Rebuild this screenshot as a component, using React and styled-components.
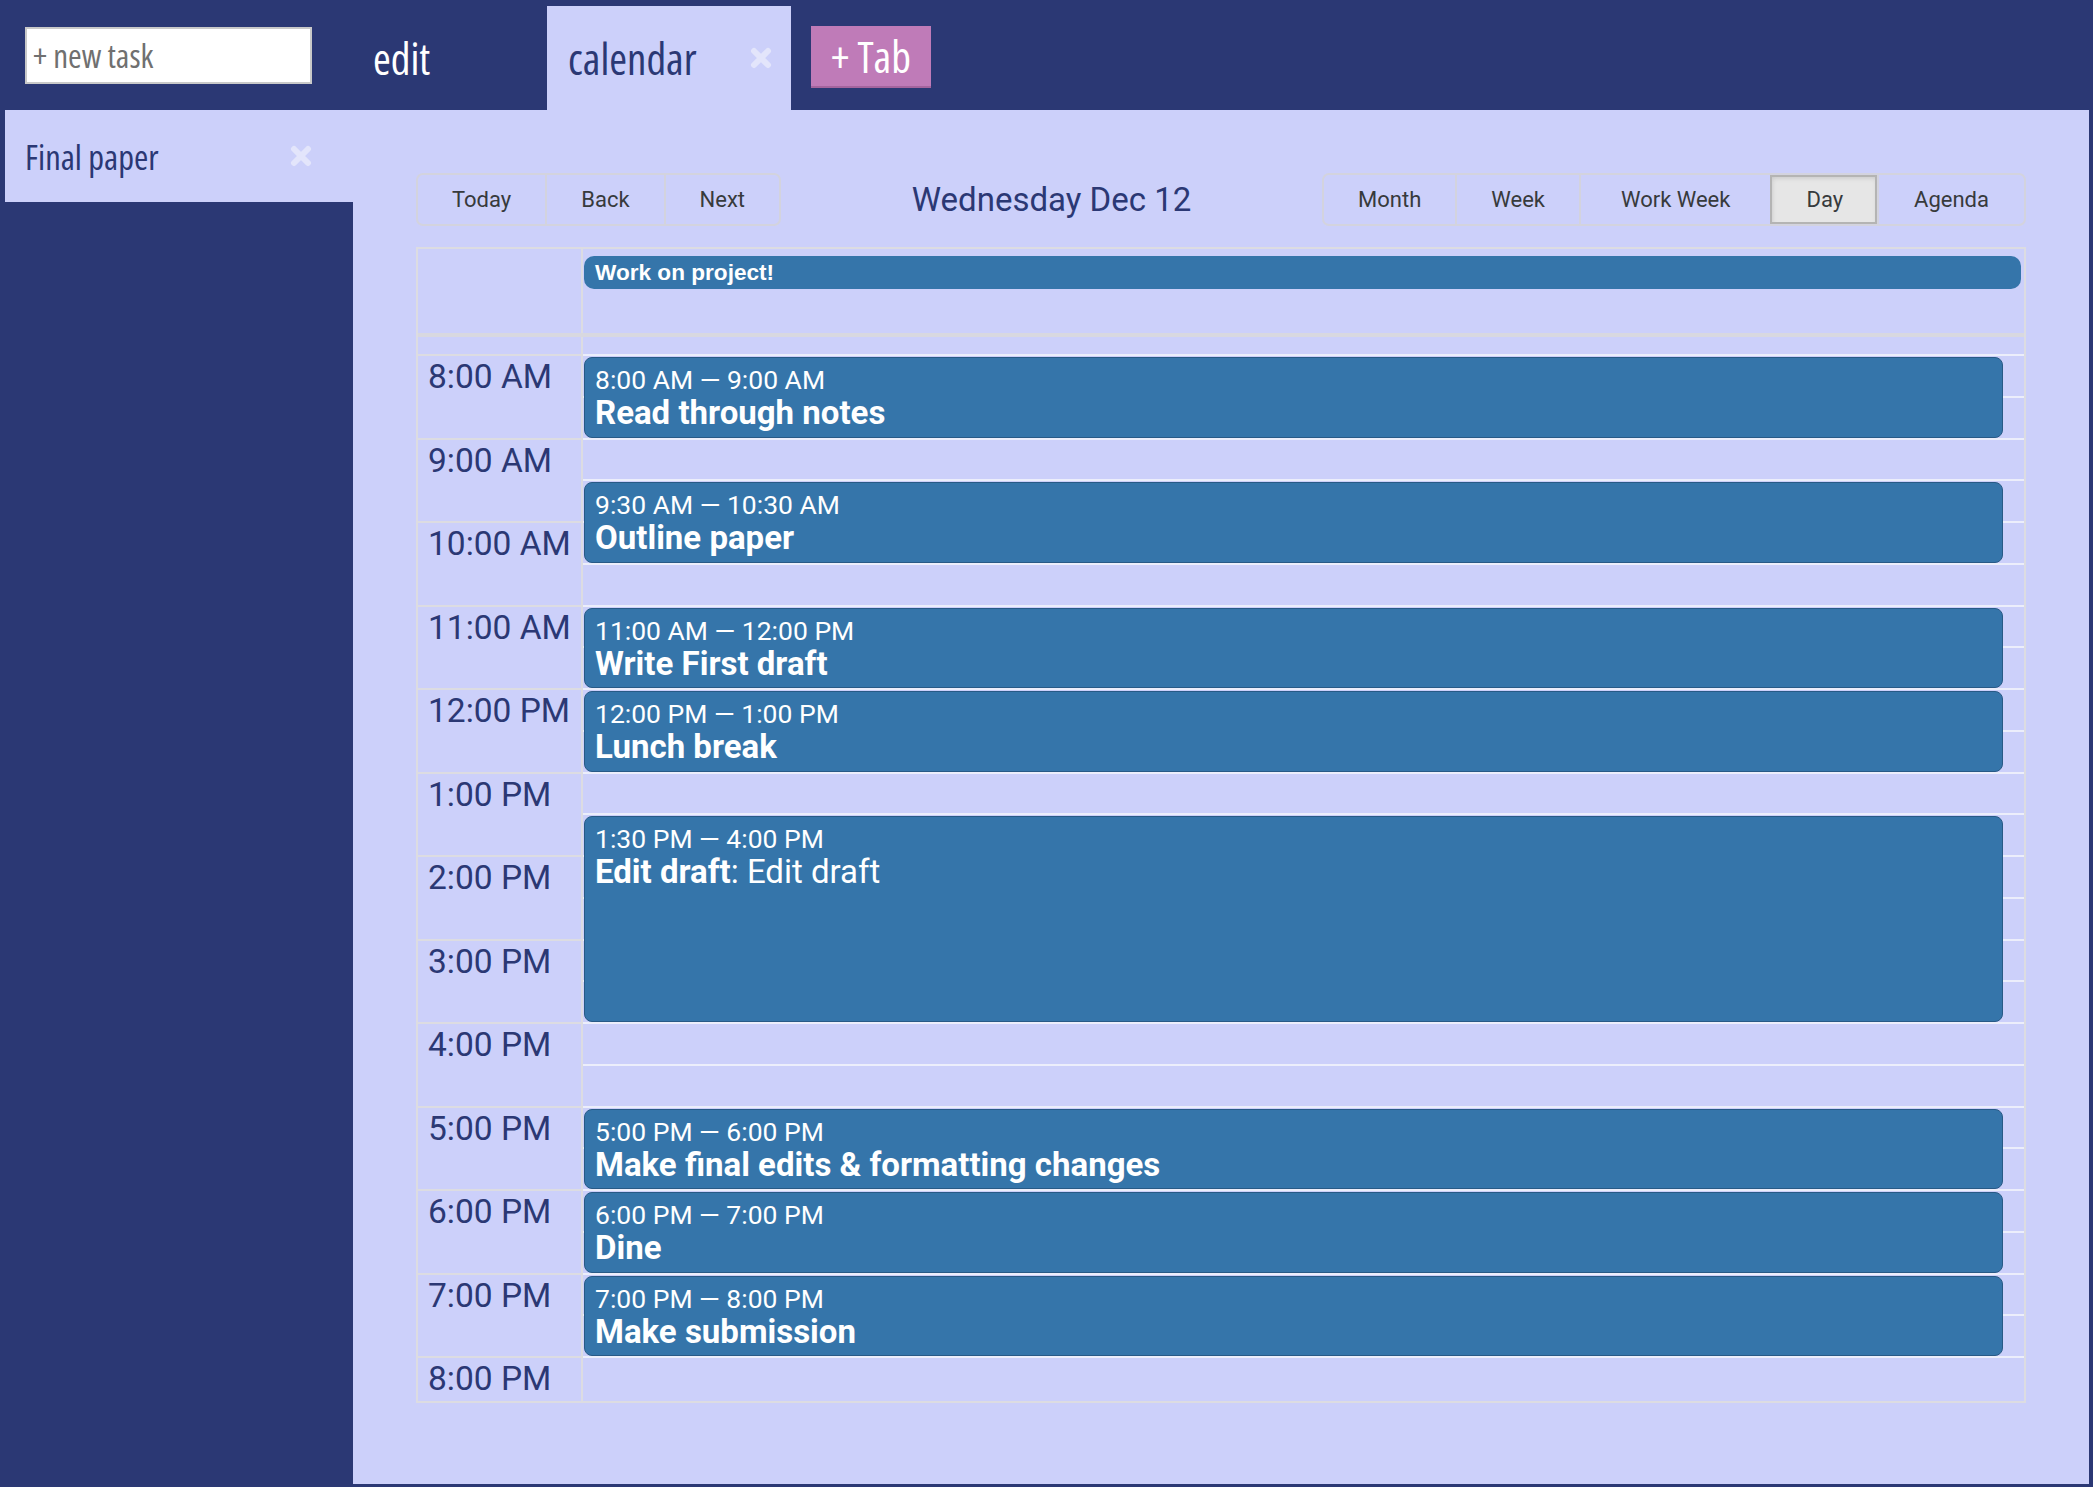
import React from "react";
import styled, { createGlobalStyle } from "styled-components";

const NAVY = "#2b3874";
const LAV = "#ccd0fa";
const EVENT = "#3575aa";
const HOUR = 83.5;
const STRIP = 19;

const GlobalStyle = createGlobalStyle`
  html, body { margin: 0; padding: 0; background: ${NAVY}; }
  body { font-family: Roboto, "Liberation Sans", sans-serif; }
  *, *::before, *::after { box-sizing: border-box; }
`;

const condensed = `
  font-family: "Liberation Sans Narrow", "Open Sans", "DejaVu Sans", sans-serif;
  font-stretch: 75%;
`;

const Page = styled.div`
  width: 2093px;
  height: 1487px;
  background: ${NAVY};
  display: flex;
  flex-direction: column;
  padding: 0 4px 3px 5px;
`;

const Header = styled.header`
  height: 110px;
  display: flex;
  align-items: stretch;
  flex-shrink: 0;
`;

const NewTaskArea = styled.div`
  width: 347px;
  display: flex;
  align-items: center;
  padding-left: 20px;
`;

const NewTaskInput = styled.input`
  width: 287px;
  height: 57px;
  border: 2px solid #c9c9c9;
  background: #fff;
  padding: 0 6px;
  ${condensed}
  font-size: 33px;
  color: #333;
  outline: none;
  &::placeholder { color: #707070; }
`;

const Tab = styled.div`
  margin-top: 6px;
  display: flex;
  align-items: center;
  padding: 0 19px 0 21px;
  width: ${(p) => p.$width}px;
  background: ${(p) => (p.$active ? LAV : "transparent")};
  color: ${(p) => (p.$active ? NAVY : "#fff")};
  ${condensed}
  font-size: 43px;
  justify-content: space-between;
`;

const CloseIcon = ({ size = 22 }) => (
  <svg width={size} height={size} viewBox="0 0 22 22">
    <path d="M4 4 L18 18 M18 4 L4 18" stroke="#e3e5fb" strokeWidth="6" strokeLinecap="round" />
  </svg>
);

const AddTab = styled.button`
  align-self: center;
  margin: 4px 0 0 20px;
  width: 120px;
  height: 62px;
  border: none;
  border-bottom: 2px solid #a4649e;
  background: #bf7bb8;
  color: #fff;
  ${condensed}
  font-size: 43px;
  padding: 0;
`;

const Main = styled.div`
  flex: 1;
  display: flex;
  min-height: 0;
`;

const Sidebar = styled.aside`
  width: 348px;
  flex-shrink: 0;
`;

const SidebarItem = styled.div`
  height: 92px;
  background: ${LAV};
  display: flex;
  align-items: center;
  justify-content: space-between;
  padding: 0 41px 0 20px;
  color: ${NAVY};
  ${condensed}
  font-size: 34.5px;
`;

const Content = styled.main`
  flex: 1;
  background: ${LAV};
  padding: 63px 63px 0 63px;
`;

const Toolbar = styled.div`
  display: flex;
  align-items: center;
  height: 53px;
`;

const ButtonGroup = styled.div`
  display: flex;
  height: 53px;
  border: 2px solid #d3d3de;
  border-radius: 7px;
  overflow: hidden;
`;

const ToolButton = styled.button`
  border: none;
  border-left: ${(p) => (p.$first ? "none" : "2px solid #d3d3de")};
  background: ${(p) => (p.$active ? "#e6e6e6" : "transparent")};
  box-shadow: ${(p) => (p.$active ? "inset 0 3px 5px rgba(0,0,0,0.14)" : "none")};
  outline: ${(p) => (p.$active ? "2px solid #b4b4b4" : "none")};
  outline-offset: -2px;
  padding: 0 ${(p) => p.$pad || 34}px;
  font-family: Roboto, "Liberation Sans", sans-serif;
  font-size: 22px;
  color: #373a3c;
`;

const Title = styled.div`
  flex: 1;
  text-align: center;
  font-size: 33px;
  color: ${NAVY};
`;

const Grid = styled.div`
  margin-top: 21px;
  border: 2px solid #dcdce2;
  display: flex;
  flex-direction: column;
`;

const AllDayRow = styled.div`
  display: grid;
  grid-template-columns: 165px 1fr;
  height: 88px;
  border-bottom: 4px solid #d8d8e0;
`;

const GutterCell = styled.div`
  border-right: 2px solid #dcdce2;
`;

const AllDayCell = styled.div`
  padding: 7px 3px 0 1px;
`;

const AllDayEvent = styled.div`
  height: 33px;
  border-radius: 10px;
  background: ${EVENT};
  color: #fff;
  font-family: "Liberation Sans", Arial, sans-serif;
  font-weight: 700;
  font-size: 22.6px;
  line-height: 33px;
  padding-left: 11px;
`;

const TimeContent = styled.div`
  display: grid;
  grid-template-columns: 165px 1fr;
`;

const Gutter = styled.div`
  display: flex;
  flex-direction: column;
  border-right: 2px solid #dcdce2;
`;

const GutterSlot = styled.div`
  height: ${(p) => p.$h}px;
  border-bottom: ${(p) => (p.$last ? "none" : "2px solid #dcdce2")};
  padding: 1px 0 0 10px;
  font-size: 33.5px;
  line-height: 39px;
  color: ${NAVY};
  white-space: nowrap;
`;

const DayColumn = styled.div`
  position: relative;
  display: flex;
  flex-direction: column;
`;

const DaySlot = styled.div`
  height: ${(p) => p.$h}px;
  border-bottom: ${(p) => (p.$last ? "none" : "2px solid #eceefb")};
`;

const Event = styled.div`
  position: absolute;
  left: 1px;
  right: 21px;
  background: ${EVENT};
  border: 1.5px solid #285a86;
  border-radius: 8px;
  padding: 7px 10px;
  color: #fff;
  overflow: hidden;
`;

const EventLabel = styled.div`
  font-size: 26.5px;
  line-height: 30px;
`;

const EventTitle = styled.div`
  font-size: 33px;
  line-height: 35px;
  font-weight: 400;
  & b { font-weight: 700; }
`;

const hours = ["8:00 AM","9:00 AM","10:00 AM","11:00 AM","12:00 PM","1:00 PM","2:00 PM","3:00 PM","4:00 PM","5:00 PM","6:00 PM","7:00 PM","8:00 PM"];

const events = [
  { s: 8, e: 9, label: "8:00 AM — 9:00 AM", title: "Read through notes" },
  { s: 9.5, e: 10.5, label: "9:30 AM — 10:30 AM", title: "Outline paper" },
  { s: 11, e: 12, label: "11:00 AM — 12:00 PM", title: "Write First draft" },
  { s: 12, e: 13, label: "12:00 PM — 1:00 PM", title: "Lunch break" },
  { s: 13.5, e: 16, label: "1:30 PM — 4:00 PM", title: "Edit draft", desc: "Edit draft" },
  { s: 17, e: 18, label: "5:00 PM — 6:00 PM", title: "Make final edits & formatting changes" },
  { s: 18, e: 19, label: "6:00 PM — 7:00 PM", title: "Dine" },
  { s: 19, e: 20, label: "7:00 PM — 8:00 PM", title: "Make submission" },
];

export default function App() {
  const daySlots = [];
  for (let i = 0; i < 25; i++) daySlots.push(i);
  return (
    <Page>
      <GlobalStyle />
      <Header>
        <NewTaskArea>
          <NewTaskInput placeholder="+ new task" />
        </NewTaskArea>
        <Tab $width={195}>edit</Tab>
        <Tab $width={244} $active>
          <span>calendar</span>
          <CloseIcon />
        </Tab>
        <AddTab>+ Tab</AddTab>
      </Header>
      <Main>
        <Sidebar>
          <SidebarItem>
            <span>Final paper</span>
            <CloseIcon />
          </SidebarItem>
        </Sidebar>
        <Content>
          <Toolbar>
            <ButtonGroup>
              <ToolButton $first>Today</ToolButton>
              <ToolButton>Back</ToolButton>
              <ToolButton>Next</ToolButton>
            </ButtonGroup>
            <Title>Wednesday Dec 12</Title>
            <ButtonGroup>
              <ToolButton $first>Month</ToolButton>
              <ToolButton>Week</ToolButton>
              <ToolButton $pad={40}>Work Week</ToolButton>
              <ToolButton $active>Day</ToolButton>
              <ToolButton $pad={35}>Agenda</ToolButton>
            </ButtonGroup>
          </Toolbar>
          <Grid>
            <AllDayRow>
              <GutterCell />
              <AllDayCell>
                <AllDayEvent>Work on project!</AllDayEvent>
              </AllDayCell>
            </AllDayRow>
            <TimeContent>
              <Gutter>
                <GutterSlot $h={STRIP} />
                {hours.map((h, i) => (
                  <GutterSlot key={h} $h={i === hours.length - 1 ? 43 : HOUR} $last={i === hours.length - 1}>
                    {h}
                  </GutterSlot>
                ))}
              </Gutter>
              <DayColumn>
                <DaySlot $h={STRIP} />
                {daySlots.map((i) => (
                  <DaySlot key={i} $h={i === 24 ? 43 : HOUR / 2} $last={i === 24} />
                ))}
                {events.map((ev) => (
                  <Event
                    key={ev.label}
                    style={{ top: STRIP + 1 + (ev.s - 8) * HOUR, height: (ev.e - ev.s) * HOUR - 3 }}
                  >
                    <EventLabel>{ev.label}</EventLabel>
                    <EventTitle>
                      <b>{ev.title}</b>
                      {ev.desc ? `: ${ev.desc}` : ""}
                    </EventTitle>
                  </Event>
                ))}
              </DayColumn>
            </TimeContent>
          </Grid>
        </Content>
      </Main>
    </Page>
  );
}
